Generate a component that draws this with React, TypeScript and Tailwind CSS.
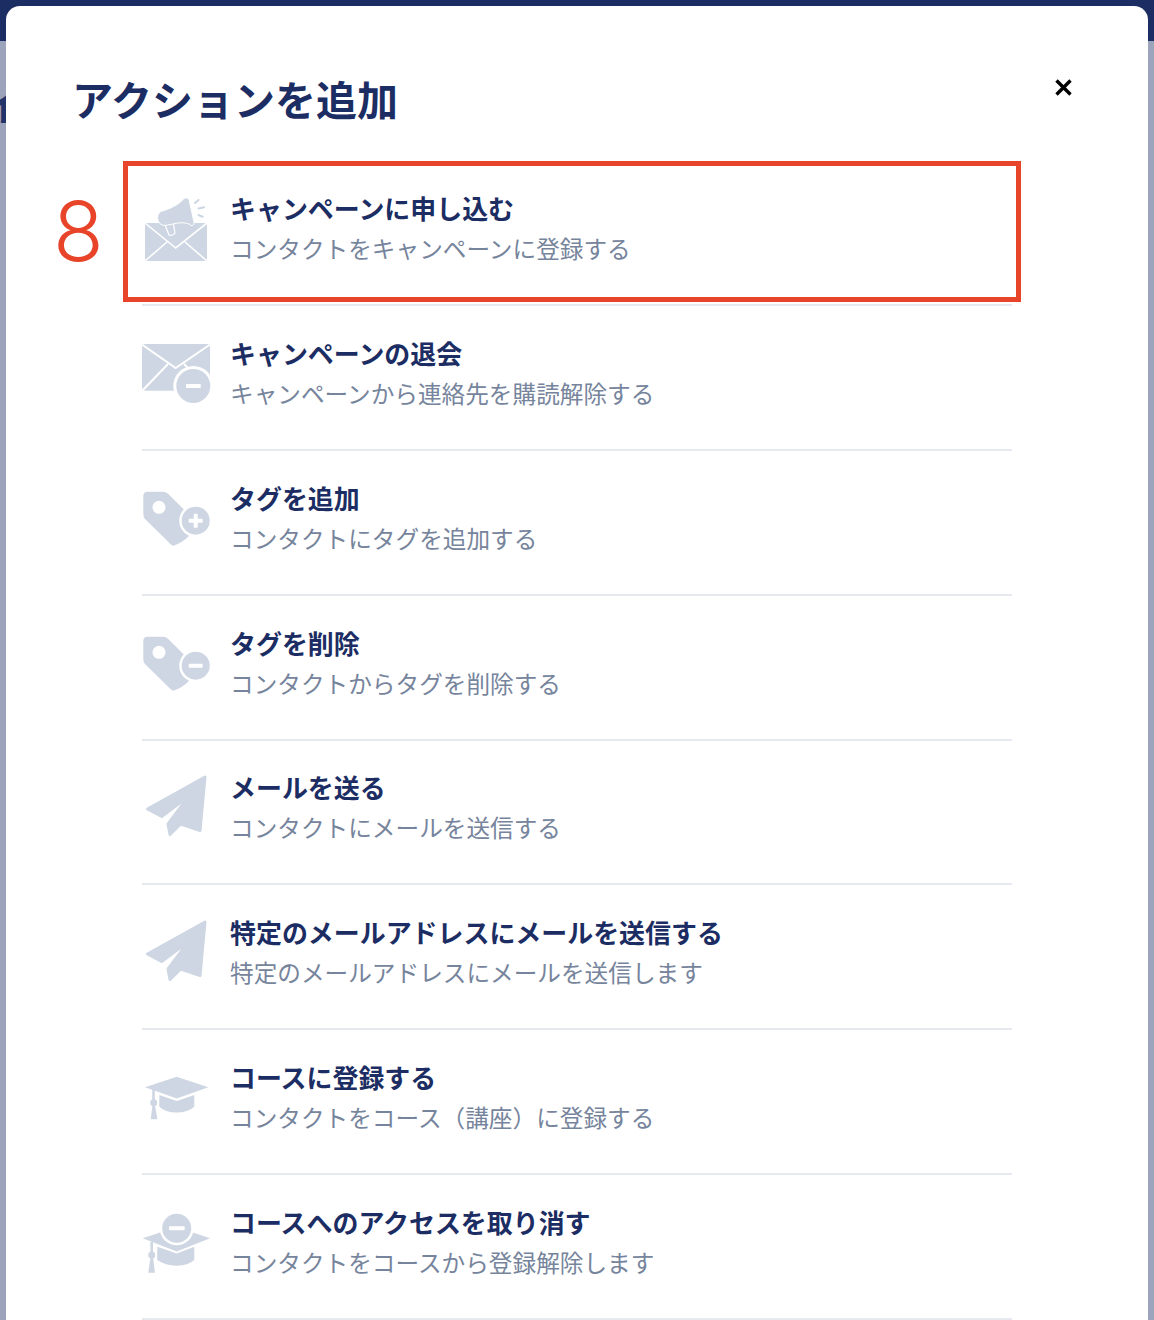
const fill = '#cdd6e2';

const CampaignJoinIcon = () => (
    <svg width="70" height="70" viewBox="0 0 70 70">
        <rect x="3" y="28" width="62" height="38" fill={fill} />
        <path d="M3 28 L33.7 53 L65 28 M3 66 L25 47 M65 66 L43 47" fill="none" stroke="#fff" strokeWidth="1.6" />
        <path d="M24 29 L23.5 31 L27 40 Q31 41.5 33 38 L31 27 Z" fill={fill} stroke="#fff" strokeWidth="1.2" />
        <path d="M22 15.5 Q15.5 16.5 15.5 23 Q16 30 23 30.5 L36 28 Q46 27 49 30.5 Q52.5 31 52 27 L47 4.5 Q45 1.5 42 3.5 Q36 11 22 15.5 Z" fill={fill} stroke="#fff" strokeWidth="1" />
        <path d="M53 8 L56.5 5 M56.5 13.5 L62 12.3 M56.5 20 L60.7 21.7" stroke={fill} strokeWidth="2" strokeLinecap="round" />
    </svg>
);

const CampaignLeaveIcon = () => (
    <svg width="70" height="70" viewBox="0 0 70 70">
        <rect x="0" y="4" width="68" height="46.7" fill={fill} />
        <path d="M0 4.5 L33.7 28 L68 4.5 M0 51 L26 24 M68 51 L42 24" fill="none" stroke="#fff" strokeWidth="2" />
        <circle cx="51.3" cy="46" r="20" fill="#fff" />
        <circle cx="51.3" cy="46" r="17" fill={fill} />
        <rect x="44" y="44" width="14.7" height="4" fill="#fff" />
    </svg>
);

const TagIcon = ({ minus }: { minus?: boolean }) => (
    <svg width="70" height="70" viewBox="0 0 70 70">
        <path d="M1.3 12 Q1.3 7.7 6 7.7 L21 7.7 Q24 7.7 26 9.7 L46.3 30 L47.3 51.7 Q40 59 31.3 61.7 Q30 61.7 28.5 60 L3 35 Q1.3 33 1.3 30 Z" fill={fill} />
        <circle cx="17" cy="23.3" r="6.5" fill="#fff" />
        <circle cx="53.7" cy="36.7" r="16.5" fill="#fff" />
        <circle cx="53.7" cy="36.7" r="14" fill={fill} />
        <rect x="46.7" y="34.7" width="14" height="4" rx="1" fill="#fff" />
        {!minus && <rect x="51.7" y="29.7" width="4" height="14" rx="1" fill="#fff" />}
    </svg>
);

const PlaneIcon = () => (
    <svg width="70" height="70" viewBox="0 0 70 70">
        <path
            d="M63 3 L58 56.5 L38.7 50 L28 60.5 L26 50 L47.3 21.7 L19.7 42.5 L5.5 35 Z"
            fill={fill}
            stroke={fill}
            strokeWidth="3"
            strokeLinejoin="round"
        />
    </svg>
);

const HatIcon = () => (
    <svg width="70" height="70" viewBox="0 3 70 70">
        <path d="M3 27.3 L34.7 16.7 L66.3 27.3 L34.7 38.5 Z" fill={fill} />
        <path d="M17.3 35 L34.7 41 L52.3 35 L52.3 46.7 Q46 52.5 34.7 52.5 Q23 52.5 17.3 46.7 Z" fill={fill} />
        <path d="M10.2 30 L12.8 30 L12.8 40 L10.2 40 Z" fill={fill} />
        <circle cx="11.7" cy="42.7" r="3.5" fill={fill} />
        <path d="M10.5 45 L13 45 L15.3 59.3 L8.7 59.3 Z" fill={fill} />
    </svg>
);

const HatMinusIcon = () => (
    <svg width="70" height="70" viewBox="0 3 70 70">
        <path d="M0.7 33.3 L34.7 22 L68 33.3 L34.7 46.5 Z" fill={fill} />
        <path d="M15.3 41.7 L34.7 48.5 L52.3 41.7 L52.3 55 Q46 60.7 34.7 60.7 Q23 60.7 15.3 55 Z" fill={fill} />
        <path d="M8.4 37 L11 37 L11 47 L8.4 47 Z" fill={fill} />
        <circle cx="9.7" cy="50" r="3.5" fill={fill} />
        <path d="M8.5 52 L11 52 L13 67.7 L6.3 67.7 Z" fill={fill} />
        <circle cx="34.7" cy="23.3" r="17" fill="#fff" />
        <circle cx="34.7" cy="23.3" r="14.5" fill={fill} />
        <rect x="27" y="21.3" width="15.7" height="4" rx="1" fill="#fff" />
    </svg>
);

const actions = [
    { icon: <CampaignJoinIcon />, title: 'キャンペーンに申し込む', desc: 'コンタクトをキャンペーンに登録する' },
    { icon: <CampaignLeaveIcon />, title: 'キャンペーンの退会', desc: 'キャンペーンから連絡先を購読解除する' },
    { icon: <TagIcon />, title: 'タグを追加', desc: 'コンタクトにタグを追加する' },
    { icon: <TagIcon minus />, title: 'タグを削除', desc: 'コンタクトからタグを削除する' },
    { icon: <PlaneIcon />, title: 'メールを送る', desc: 'コンタクトにメールを送信する' },
    { icon: <PlaneIcon />, title: '特定のメールアドレスにメールを送信する', desc: '特定のメールアドレスにメールを送信します' },
    { icon: <HatIcon />, title: 'コースに登録する', desc: 'コンタクトをコース（講座）に登録する' },
    { icon: <HatMinusIcon />, title: 'コースへのアクセスを取り消す', desc: 'コンタクトをコースから登録解除します' },
];

export default function App() {
    return (
        <div className="relative h-[1320px] w-[1154px] overflow-hidden bg-[#9ca4bb] pt-[6px] font-['Noto_Sans_CJK_JP',sans-serif]">
            {/* Page behind the modal */}
            <div className="absolute inset-x-0 top-0 h-[41px] bg-[#1c2d63]"></div>
            <div className="absolute left-[-18px] top-[80px] text-[40px] font-bold leading-[48px] text-[#22346a]">イ</div>

            <div className="relative mx-[6px] h-[1400px] rounded-t-[14px] bg-white">
                <div className="flex items-start justify-between pl-[66px] pr-[76px] pt-[61px]">
                    <h1 className="text-[41px] font-semibold leading-[62px] text-[#1c2d63]">アクションを追加</h1>
                    <button className="mt-[12px] text-black">
                        <svg width="17" height="17" viewBox="0 0 17 17">
                            <path d="M1.5 1.5 L15.5 15.5 M15.5 1.5 L1.5 15.5" stroke="currentColor" strokeWidth="3.4" />
                        </svg>
                    </button>
                </div>

                <div className="ml-[136px] mt-[32.5px] w-[870px]">
                    {actions.map((a) => (
                        <div key={a.title} className="flex h-[144.75px] items-center border-b-2 border-[#e6e9ef]">
                            <div className="mb-[6px] h-[70px] w-[88px] shrink-0">{a.icon}</div>
                            <div className="mb-[9px] flex flex-col">
                                <div className="text-[25.95px] font-semibold leading-[38px] text-[#1c2d63]">{a.title}</div>
                                <div className="mt-[2px] text-[23.65px] leading-[38px] text-[#76849c]">{a.desc}</div>
                            </div>
                        </div>
                    ))}
                </div>

                {/* Annotation over the first row */}
                <div className="absolute left-[117px] top-[155px] h-[141px] w-[898px] border-[5px] border-[#e8442a]"></div>
                <div className="absolute left-[47px] top-[176px] font-['Inter',sans-serif] text-[83px] font-light leading-[98px] text-[#e8442a]">8</div>
            </div>
        </div>
    );
}
